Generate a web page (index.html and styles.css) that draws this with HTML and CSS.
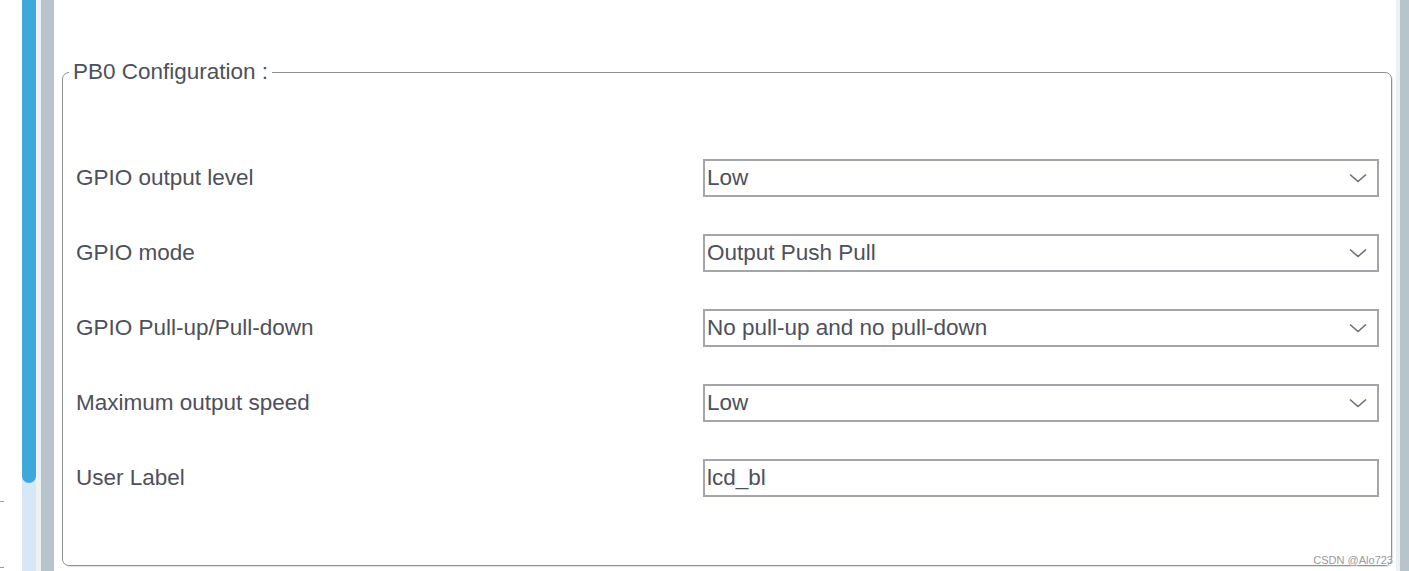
FILE: index.html
```html
<!DOCTYPE html>
<html>
<head>
<meta charset="utf-8">
<link rel="stylesheet" href="styles.css">
</head>
<body>
<div class="gutter"><div class="tick t1"></div><div class="tick t2"></div></div>
<div class="scrollbar"><div class="thumb"></div></div>
<div class="strip"></div>
<div class="rail"></div>
<main class="main">
  <fieldset class="config">
    <legend class="legend">PB0 Configuration :</legend>
    <div class="grid">
      <div class="label">GPIO output level</div>
      <div class="select"><span>Low</span><svg class="chev" width="18" height="10" viewBox="0 0 18 10"><path d="M1 1.5 L9 8.5 L17 1.5" fill="none" stroke="#6b6e72" stroke-width="1.6"/></svg></div>
      <div class="label">GPIO mode</div>
      <div class="select"><span>Output Push Pull</span><svg class="chev" width="18" height="10" viewBox="0 0 18 10"><path d="M1 1.5 L9 8.5 L17 1.5" fill="none" stroke="#6b6e72" stroke-width="1.6"/></svg></div>
      <div class="label">GPIO Pull-up/Pull-down</div>
      <div class="select"><span>No pull-up and no pull-down</span><svg class="chev" width="18" height="10" viewBox="0 0 18 10"><path d="M1 1.5 L9 8.5 L17 1.5" fill="none" stroke="#6b6e72" stroke-width="1.6"/></svg></div>
      <div class="label">Maximum output speed</div>
      <div class="select"><span>Low</span><svg class="chev" width="18" height="10" viewBox="0 0 18 10"><path d="M1 1.5 L9 8.5 L17 1.5" fill="none" stroke="#6b6e72" stroke-width="1.6"/></svg></div>
      <div class="label">User Label</div>
      <div class="select input"><span>lcd_bl</span></div>
    </div>
  </fieldset>
  <div class="watermark">CSDN @Alo723</div>
</main>
<div class="strip right"></div>
<div class="rail right"></div>
</body>
</html>
```
FILE: styles.css
```css
html, body {
  margin: 0;
  padding: 0;
  background: #ffffff;
}
body {
  display: flex;
  width: 1409px;
  height: 571px;
  overflow: hidden;
  font-family: "Liberation Sans", Arial, sans-serif;
  color: #4e505c;
}
.gutter {
  width: 22px;
  flex: none;
  display: flex;
  flex-direction: column;
}
.tick {
  width: 4px;
  height: 1px;
  background: #9a9da0;
}
.t1 { margin-top: 501px; }
.t2 { margin-top: 65px; }
.scrollbar {
  width: 14px;
  flex: none;
  background: #d6e8f6;
}
.thumb {
  height: 483px;
  background: #3ea8dd;
  border-radius: 0 0 7px 7px;
}
.strip {
  width: 5px;
  flex: none;
  background: #edf1f4;
}
.rail {
  width: 13px;
  flex: none;
  background: #b8c4cb;
}
.strip.right { width: 4px; }
.rail.right { width: 9px; }
.main {
  flex: 1;
  position: relative;
  padding: 0 4px 0 8px;
}
.config {
  margin: 59px 0 0 0;
  padding: 0 12px 0 13px;
  height: 507px;
  box-sizing: border-box;
  border: 1px solid #8c9196;
  border-radius: 7px;
  box-shadow: 1px 1px 1px rgba(0,0,0,0.12);
}
.legend {
  margin-left: -7px;
  padding: 0 4px;
  font-size: 22.5px;
  line-height: 26px;
  height: 26px;
}
.grid {
  display: grid;
  grid-template-columns: 627px 1fr;
  grid-template-rows: 38px 38px 38px 38px 38px;
  row-gap: 37px;
  margin-top: 74px;
}
.label {
  font-size: 22.5px;
  display: flex;
  align-items: center;
}
.select {
  border: 2px solid #a2a6aa;
  box-sizing: border-box;
  display: flex;
  align-items: center;
  justify-content: space-between;
  padding: 0 10px 0 2px;
  font-size: 22.5px;
}
.chev {
  display: block;
}
.watermark {
  position: absolute;
  right: 3px;
  bottom: 5px;
  font-size: 11px;
  color: #9a9a9a;
  text-shadow: 1px 1px 0 #fff;
}
```
